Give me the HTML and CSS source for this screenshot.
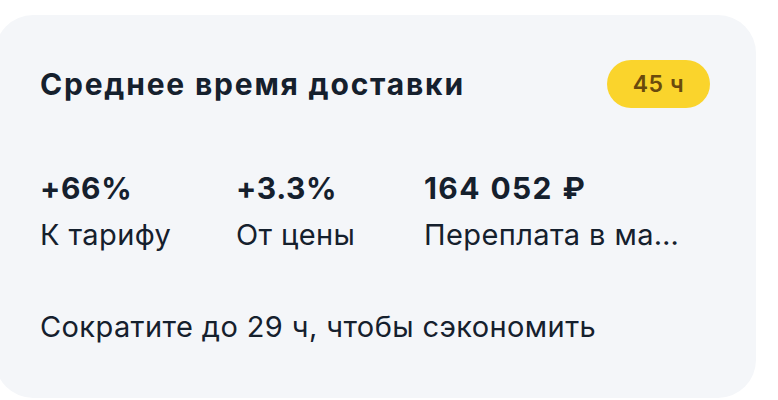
FILE: index.html
```html
<!DOCTYPE html>
<html lang="ru">
<head>
<meta charset="utf-8">
<link rel="stylesheet" href="styles.css">
</head>
<body>
<div class="card">
  <div class="header">
    <div class="title">Среднее время доставки</div>
    <div class="badge">45 ч</div>
  </div>
  <div class="stats">
    <div class="stat">
      <div class="value">+66%</div>
      <div class="label">К тарифу</div>
    </div>
    <div class="stat">
      <div class="value">+3.3%</div>
      <div class="label">От цены</div>
    </div>
    <div class="stat">
      <div class="value value-money">164 052 ₽</div>
      <div class="label">Переплата в маркетплейсе</div>
    </div>
  </div>
  <div class="hint">Сократите до 29 ч, чтобы сэкономить</div>
</div>
</body>
</html>
```

FILE: styles.css
```css
html, body {
  margin: 0;
  padding: 0;
  background: #ffffff;
}
body {
  font-family: Inter, "Noto Sans", sans-serif;
  color: #15202d;
  width: 778px;
  height: 400px;
  overflow: hidden;
}
.card {
  margin: 15px 0 0 -5px;
  width: 761px;
  height: 383px;
  box-sizing: border-box;
  background: #f4f6f9;
  border-radius: 38px;
  padding: 45px 46px 0 45px;
}
.header {
  display: flex;
  align-items: center;
  justify-content: space-between;
  height: 48px;
}
.title {
  font-size: 30px;
  font-weight: 700;
  letter-spacing: 1.8px;
}
.badge {
  height: 48px;
  width: 103px;
  border-radius: 24px;
  background: #fad42c;
  color: #6a4a0c;
  font-size: 23px;
  font-weight: 600;
  letter-spacing: 0.6px;
  display: flex;
  align-items: center;
  justify-content: center;
}
.stats {
  display: grid;
  grid-template-columns: 196px 188px 264px;
  margin-top: 63px;
}
.stat {
  display: flex;
  flex-direction: column;
  min-width: 0;
}
.value {
  font-size: 30px;
  font-weight: 700;
  line-height: 34px;
  letter-spacing: 0.6px;
  white-space: nowrap;
}
.value-money {
  letter-spacing: 1.4px;
  word-spacing: 1px;
}
.label {
  font-size: 29px;
  font-weight: 400;
  line-height: 34px;
  letter-spacing: 0.4px;
  margin-top: 13px;
  white-space: nowrap;
  overflow: hidden;
  text-overflow: ellipsis;
}
.hint {
  margin-top: 58px;
  font-size: 29px;
  line-height: 34px;
  letter-spacing: 0.4px;
}
```
